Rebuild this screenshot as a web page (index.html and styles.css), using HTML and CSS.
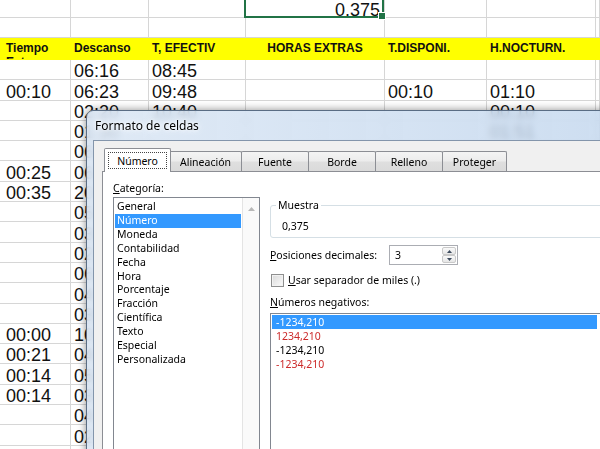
FILE: index.html
```html
<!DOCTYPE html>
<html lang="es">
<head>
    <meta charset="UTF-8">
    <meta name="viewport" content="width=device-width, initial-scale=1.0">
    <title>Formato de celdas</title>
    <link rel="stylesheet" href="styles.css">
</head>
<body>
    <div class="sheet" id="sheet"></div>

    <div class="dialog">
        <div class="title">Formato de celdas</div>
        <div class="client">
            <div class="tabs">
                <div class="tab on"><span class="focus">Número</span></div>
                <div class="tab w-ali">Alineación</div>
                <div class="tab w-std">Fuente</div>
                <div class="tab w-std">Borde</div>
                <div class="tab w-std">Relleno</div>
                <div class="tab w-pro">Proteger</div>
            </div>
            <div class="panel">
                <div class="left">
                    <div class="lbl"><u>C</u>ategoría:</div>
                    <div class="listbox">
                        <div class="items">
                            <div class="item">General</div>
                            <div class="item sel">Número</div>
                            <div class="item">Moneda</div>
                            <div class="item">Contabilidad</div>
                            <div class="item">Fecha</div>
                            <div class="item">Hora</div>
                            <div class="item">Porcentaje</div>
                            <div class="item">Fracción</div>
                            <div class="item">Científica</div>
                            <div class="item">Texto</div>
                            <div class="item">Especial</div>
                            <div class="item">Personalizada</div>
                        </div>
                        <div class="scroll">
                            <svg width="7" height="4" viewBox="0 0 7 4"><path d="M0 4L3.5 0L7 4Z" fill="#b8b8b8"/></svg>
                        </div>
                    </div>
                </div>
                <div class="right">
                    <fieldset class="sample">
                        <legend>Muestra</legend>
                        <div class="sample-value">0,375</div>
                    </fieldset>
                    <div class="spin-row">
                        <span class="spin-label"><u>P</u>osiciones decimales:</span>
                        <div class="spin">
                            <span class="spin-value">3</span>
                            <div class="spin-btns">
                                <div class="spin-btn"><svg width="5" height="3" viewBox="0 0 5 3"><path d="M0 3L2.5 0L5 3Z" fill="#3d4b5e"/></svg></div>
                                <div class="spin-btn"><svg width="5" height="3" viewBox="0 0 5 3"><path d="M0 0L2.5 3L5 0Z" fill="#3d4b5e"/></svg></div>
                            </div>
                        </div>
                    </div>
                    <div class="check-row">
                        <span class="box"></span>
                        <span><u>U</u>sar separador de miles (.)</span>
                    </div>
                    <div class="lbl neg-label"><u>N</u>úmeros negativos:</div>
                    <div class="neglist">
                        <div class="item sel">-1234,210</div>
                        <div class="item red">1234,210</div>
                        <div class="item">-1234,210</div>
                        <div class="item red">-1234,210</div>
                    </div>
                </div>
            </div>
        </div>
    </div>

    <script>
        const sheet = document.getElementById('sheet');

        const header = ['Tiempo Extra', 'Descanso', 'T, EFECTIV', 'HORAS EXTRAS', 'T.DISPONI.', 'H.NOCTURN.', ''];
        // las filas de abajo quedan tapadas por el diálogo: solo se ve la columna B
        const rows = [
            ['', '06:16', '08:45', '', '', '', ''],
            ['00:10', '06:23', '09:48', '', '00:10', '01:10', ''],
            ['', '02:20', '10:40', '', '', '00:10', ''],
            ['', '01:30', '', '', '', '01:51', ''],
            ['', '06:05', '', '', '', '', ''],
            ['00:25', '06:40', '', '', '', '', ''],
            ['00:35', '20:15', '', '', '', '', ''],
            ['', '05:40', '', '', '', '', ''],
            ['', '03:15', '', '', '', '', ''],
            ['', '02:45', '', '', '', '', ''],
            ['', '06:30', '', '', '', '', ''],
            ['', '04:10', '', '', '', '', ''],
            ['', '03:20', '', '', '', '', ''],
            ['00:00', '10:30', '', '', '', '', ''],
            ['00:21', '04:25', '', '', '', '', ''],
            ['00:14', '05:10', '', '', '', '', ''],
            ['00:14', '03:35', '', '', '', '', ''],
            ['', '04:50', '', '', '', '', ''],
            ['', '02:55', '', '', '', '', ''],
            ['', '06:05', '', '', '', '', '']
        ];

        function addCell(text, cls) {
            const div = document.createElement('div');
            div.className = 'cell' + (cls ? ' ' + cls : '');
            div.textContent = text;
            sheet.appendChild(div);
        }

        // fila de la celda activa
        for (let i = 0; i < 7; i++) addCell(i === 3 ? '0.375' : '', i === 3 ? 'active' : '');
        for (let i = 0; i < 7; i++) addCell('');
        header.forEach((text, i) => {
            let cls = 'head';
            if (i === 0) cls += ' first';
            if (i === 3) cls += ' center';
            addCell(text, cls);
        });
        rows.forEach(row => {
            row.forEach((text, i) => addCell(text, i === 0 ? 'first' : ''));
        });
    </script>
</body>
</html>
```

FILE: styles.css
```css
* {
    box-sizing: border-box;
}

body {
    margin: 0;
    width: 600px;
    height: 449px;
    overflow: hidden;
    position: relative;
    background: #fff;
    font-family: "Liberation Sans", Arial, sans-serif;
    color: #111;
}

/* hoja de cálculo */
.sheet {
    display: grid;
    grid-template-columns: 71px 78px 97px 139px 102px 109px 1fr;
    grid-template-rows: 22px 20px 22px;
    grid-auto-rows: 20.3px;
    margin-top: -4px;
}

.cell {
    border-right: 1px solid #d6d6d6;
    border-bottom: 1px solid #d6d6d6;
    font-size: 18px;
    line-height: 16px;
    padding-left: 3px;
    display: flex;
    align-items: flex-end;
    white-space: nowrap;
    overflow: hidden;
}

.cell.first {
    padding-left: 6px;
}

.cell.head {
    background: #ffff00;
    border-color: #ffff00;
    font-size: 12px;
    font-weight: bold;
    line-height: 14px;
    align-items: flex-start;
    padding-top: 3px;
    white-space: normal;
}

.cell.center {
    justify-content: center;
    padding-left: 0;
}

.cell.active {
    justify-content: flex-end;
    padding-right: 4px;
    line-height: 13px;
    position: relative;
    overflow: visible;
}

.cell.active::before {
    content: '';
    position: absolute;
    left: -2px;
    right: 0;
    top: -2px;
    bottom: -1px;
    border: 2px solid #217346;
}

.cell.active::after {
    content: '';
    position: absolute;
    right: -2px;
    bottom: -3px;
    width: 6px;
    height: 6px;
    background: #217346;
    border: 1px solid #fff;
}

/* ventana de diálogo */
.dialog {
    position: absolute;
    left: 86px;
    top: 110px;
    width: 560px;
    height: 380px;
    border: 1px solid #5a6d84;
    border-radius: 7px 7px 0 0;
    background: linear-gradient(90deg, rgba(218, 230, 244, 0.86), rgba(192, 213, 237, 0.8));
    backdrop-filter: blur(3px);
    box-shadow: 0 0 8px rgba(0, 0, 0, 0.45);
    padding-left: 6px;
    font-family: "Noto Sans", sans-serif;
    font-size: 10.5px;
    color: #000;
}

.title {
    height: 29px;
    line-height: 29px;
    padding-left: 2px;
    font-size: 12px;
    text-shadow: 0 0 6px #fff, 0 0 3px #fff;
}

.client {
    height: 100%;
    background: #f0f0f0;
    border-top: 1px solid #8395ab;
    border-left: 1px solid #8395ab;
    padding-left: 8px;
}

.tabs {
    display: flex;
    align-items: flex-end;
    height: 30px;
    padding-left: 2px;
}

.tab {
    height: 20px;
    border: 1px solid #8c8e94;
    border-bottom: none;
    border-radius: 2px 2px 0 0;
    margin-left: -1px;
    background: linear-gradient(#f4f4f4, #ececec 48%, #dfdfdf 52%, #dadada);
    display: flex;
    align-items: center;
    justify-content: center;
    line-height: 14px;
}

.tab.on {
    width: 67px;
    height: 24px;
    margin-left: 0;
    margin-bottom: -1px;
    margin-right: -1px;
    padding: 3px;
    background: #fff;
    position: relative;
    z-index: 1;
}

.focus {
    flex: 1;
    align-self: stretch;
    border: 1px dotted #444;
    display: flex;
    align-items: center;
    justify-content: center;
}

.w-ali {
    width: 73px;
}

.w-std {
    width: 68px;
}

.w-pro {
    width: 65px;
}

.panel {
    height: 100%;
    background: #fff;
    border-top: 1px solid #8c8e94;
    border-left: 1px solid #8c8e94;
    padding: 9px 0 0 10px;
    display: flex;
    gap: 10px;
}

.lbl {
    line-height: 14px;
}

.left {
    width: 147px;
}

.listbox {
    margin-top: 2px;
    height: 270px;
    border: 1px solid #828790;
    display: flex;
    background: #fff;
}

.items {
    flex: 1;
    padding-top: 2px;
}

.item {
    line-height: 13.9px;
    padding-left: 2px;
    margin: 0 1px;
    white-space: nowrap;
}

.item.sel {
    background: #3399ff;
    color: #fff;
}

.scroll {
    width: 17px;
    border-left: 1px solid #e4e4e4;
    background: #fafafa;
    display: flex;
    justify-content: center;
    align-items: flex-start;
    padding-top: 9px;
}

.scroll svg {
    display: block;
}

.right {
    width: 331px;
}

.sample {
    margin: 17px 0 0;
    padding: 7px 0 4px 11px;
    width: 345px;
    border: 1px solid #d5dfe5;
    border-radius: 3px;
    min-width: 0;
}

.sample legend {
    padding: 0 2px;
    margin-left: -6px;
    line-height: 14px;
}

.sample-value {
    line-height: 14px;
}

.spin-row {
    display: flex;
    align-items: center;
    margin-top: 7px;
    height: 20px;
}

.spin-label {
    width: 119px;
}

.spin {
    width: 69px;
    height: 20px;
    border: 1px solid #abadb3;
    background: #fff;
    display: flex;
}

.spin-value {
    flex: 1;
    padding-left: 5px;
    line-height: 18px;
}

.spin-btns {
    width: 15px;
    display: flex;
    flex-direction: column;
    padding: 1px 1px 1px 0;
}

.spin-btn {
    flex: 1;
    border: 1px solid #c9c9c9;
    border-radius: 2px;
    background: linear-gradient(#fafafa, #e6e6e6);
    display: flex;
    align-items: center;
    justify-content: center;
}

.spin-btn svg {
    display: block;
}

.check-row {
    display: flex;
    align-items: center;
    gap: 4px;
    margin-top: 8px;
    height: 14px;
    padding-left: 1px;
}

.box {
    width: 13px;
    height: 13px;
    border: 1px solid #8e8f8f;
    background: linear-gradient(135deg, #d9d9d9, #fbfbfb);
    box-shadow: inset 0 0 0 1px #f2f2f2;
}

.neg-label {
    margin-top: 8px;
}

.neglist {
    margin-top: 4px;
    height: 200px;
    border: 1px solid #828790;
    padding-top: 1px;
    background: #fff;
}

.neglist .item {
    line-height: 14px;
    padding-left: 4px;
    margin-right: 3px;
}

.neglist .item.red {
    color: #cc2a2a;
}
```
